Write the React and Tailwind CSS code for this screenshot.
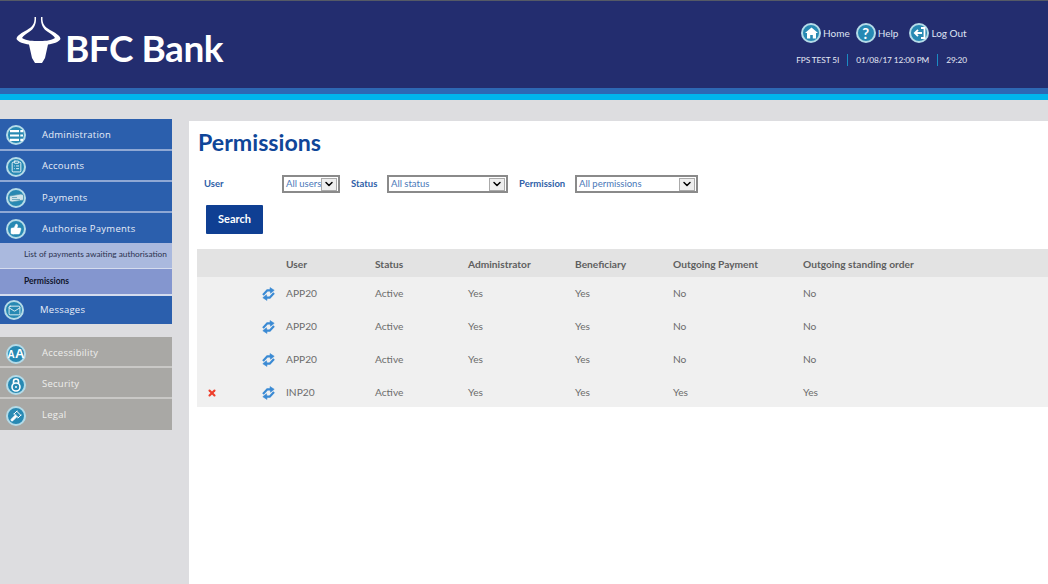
import { ChevronDown, ClipboardList, Gavel, Mail, ThumbsUp, X } from "lucide-react";

function RoundIcon({ children, className = "" }) {
  return (
    <span className={`flex h-5 w-5 shrink-0 items-center justify-center rounded-full border-2 border-[#b4dbe8] bg-[#2789b3] text-white ${className}`}>
      {children}
    </span>
  );
}

function Logo() {
  return (
    <svg width="46" height="48" viewBox="16 16 46 48" className="shrink-0" fill="#fff">
      <path d="M34.5 17C35 24 32 27 27 30C22 33 17 35 16.5 39C18 42 24 44 29 44.5L32 58L35 63L42 63L45 58L48 44.5C53 44 59 42 60.5 39C60 35 55 33 50 30C45 27 42 24 42.5 17L41 17C40.5 24 43 29 48 32C51 34 54 36 55 38C50 41 44 41 38.5 41C33 41 27 41 22 38C23 36 26 34 29 32C34 29 36.5 24 36 17Z" />
    </svg>
  );
}

function HomeGlyph() {
  return (
    <svg width="13" height="12" viewBox="0 0 13 12" fill="#fff">
      <path d="M6.5 0.5L13 6H11V11.5H7.8V8H5.2V11.5H2V6H0Z" />
    </svg>
  );
}

function BackGlyph() {
  return (
    <svg width="13" height="12" viewBox="0 0 13 12" fill="none" stroke="#fff" strokeWidth="1.8">
      <path d="M8 1H11.5V11H8" />
      <path d="M9 6H2M5 2.8L1.8 6L5 9.2" />
    </svg>
  );
}

function ListGlyph() {
  return (
    <svg width="13" height="11" viewBox="0 0 13 11" fill="#fff">
      <path d="M0 0H9V2.2H0ZM0 4.4H9V6.6H0ZM0 8.8H9V11H0ZM10.3 0H13V2.2H10.3ZM10.3 4.4H13V6.6H10.3ZM10.3 8.8H13V11H10.3Z" />
    </svg>
  );
}

function NotesGlyph() {
  return (
    <svg width="15" height="10" viewBox="0 0 15 10" fill="#cfe4ea" stroke="#4a93ae" strokeWidth="0.7">
      <path d="M0.5 3L12 1L14.5 2V7L3 9L0.5 8Z" />
      <path d="M3 4.5H8M3 6.5H11" />
    </svg>
  );
}

function LockGlyph() {
  return (
    <svg width="12" height="14" viewBox="0 0 12 14" fill="none" stroke="#fff" strokeWidth="1.6">
      <path d="M3.5 5.5V3.5A2.5 2.5 0 0 1 8.5 3.5V5.5" />
      <circle cx="6" cy="9" r="4" />
      <circle cx="6" cy="9" r="1" fill="#fff" stroke="none" />
    </svg>
  );
}

function SyncGlyph() {
  return (
    <svg width="15" height="14" viewBox="0 0 15 14" fill="none" stroke="#3a8ad4" strokeWidth="2.2">
      <path d="M2 8L6.3 3.3H10" />
      <path d="M13 6L8.7 10.7H5" />
      <path d="M9 0.6L13.2 3.3L9.5 6.2Z" fill="#3a8ad4" strokeWidth="0.6" />
      <path d="M6 13.4L1.8 10.7L5.5 7.8Z" fill="#3a8ad4" strokeWidth="0.6" />
    </svg>
  );
}

function TopLink({ icon, label, className = "" }) {
  return (
    <a className={`flex items-center gap-[2px] text-[10px] whitespace-nowrap text-[#dfe3f3] ${className}`}>
      <RoundIcon>{icon}</RoundIcon>
      <span>{label}</span>
    </a>
  );
}

function Header() {
  return (
    <header className="shrink-0">
      <div className="flex h-[88px] items-start justify-between border-t border-[#555a66] bg-[#232d6f] pl-[16px] pr-[81px]">
        <div className="flex items-start gap-[3px] pt-[15px]">
          <Logo />
          <span className="mt-[8px] font-['Lato',sans-serif] text-[37px] font-bold leading-[48px] tracking-[-0.5px] text-white">BFC Bank</span>
        </div>
        <div className="flex flex-col items-end pt-[22px]">
          <div className="flex w-[166px]">
            <TopLink icon={<HomeGlyph />} label="Home" />
            <TopLink icon={<span className="text-[15px] font-bold leading-none">?</span>} label="Help" className="ml-[6px]" />
            <TopLink icon={<BackGlyph />} label="Log Out" className="ml-[11px]" />
          </div>
          <div className="mt-[11px] flex h-[12px] items-center text-[8.3px] leading-[12px] tracking-[-0.1px] text-[#e6e9f5]">
            <span className="pr-[8px]">FPS TEST 5I</span>
            <span className="border-l border-[#1b8cc4] px-[8px]">01/08/17 12:00 PM</span>
            <span className="border-l border-[#1b8cc4] pl-[8px]">29:20</span>
          </div>
        </div>
      </div>
      <div className="h-[6px] bg-[#2d68b4]" />
      <div className="h-[6px] bg-[#00b5ec]" />
    </header>
  );
}

function NavItem({ icon, label, height, gray, pad = "pt-[2px]" }) {
  return (
    <a
      className={`flex items-center border-b-2 pl-[6px] text-[9.5px] tracking-[0.25px] ${pad} ${height} ${
        gray ? "border-[#c9c8c6] bg-[#a9a8a5] text-[#eeeeec]" : "border-[#8fa8d4] bg-[#2b5fad] text-[#e8eef8]"
      }`}
    >
      <RoundIcon>{icon}</RoundIcon>
      <span className="ml-[16px]">{label}</span>
    </a>
  );
}

function Sidebar() {
  return (
    <aside className="w-[189px] shrink-0 bg-[#dddde0] pt-[19px]">
      <nav className="w-[172px] font-['Open_Sans',sans-serif]">
        <NavItem height="h-[32px]" icon={<ListGlyph />} label="Administration" />
        <NavItem height="h-[31px]" icon={<ClipboardList size={13} strokeWidth={1.6} />} label="Accounts" />
        <NavItem height="h-[31px]" pad="pt-[3px]" icon={<NotesGlyph />} label="Payments" />
        <div className="flex h-[30px] items-center bg-[#2b5fad] pl-[6px] pt-[2px] text-[9.5px] tracking-[0.25px] text-[#e8eef8]">
          <RoundIcon><ThumbsUp size={12} fill="#fff" strokeWidth={1} /></RoundIcon>
          <span className="ml-[16px]">Authorise Payments</span>
        </div>
        <div className="flex h-[26px] items-center border-b border-[#d5dcee] bg-[#aab9de] pb-[3px] pl-[24px] font-['Lato',sans-serif] text-[8.3px] whitespace-nowrap text-[#2c3350]">
          List of payments awaiting authorisation
        </div>
        <div className="flex h-[27px] items-center border-b-2 border-[#d5dcee] bg-[#8496cf] pl-[24px] font-['Lato',sans-serif] text-[8.5px] font-bold text-[#10152c]">
          Permissions
        </div>
        <div className="flex h-[28px] items-center bg-[#2b5fad] pl-[4px] text-[9.5px] tracking-[0.25px] text-[#e8eef8]">
          <RoundIcon><Mail size={13} strokeWidth={1.5} /></RoundIcon>
          <span className="ml-[16px]">Messages</span>
        </div>
        <div className="mt-[13px]">
          <NavItem gray height="h-[31px]" pad="pt-[4px]" icon={<span className="font-['Liberation_Sans',sans-serif] text-[13px] font-bold leading-none"><span className="text-[10px]">A</span>A</span>} label="Accessibility" />
          <NavItem gray height="h-[31px]" pad="pt-[4px]" icon={<LockGlyph />} label="Security" />
          <div className="flex h-[31px] items-center bg-[#a9a8a5] pl-[6px] pt-[2px] text-[9.5px] tracking-[0.25px] text-[#eeeeec]">
            <RoundIcon><Gavel size={12} fill="#fff" strokeWidth={2} /></RoundIcon>
            <span className="ml-[16px]">Legal</span>
          </div>
        </div>
      </nav>
    </aside>
  );
}

function FakeSelect({ value, width }) {
  return (
    <div className={`flex h-[18px] items-center justify-between border-2 border-[#8a8a8a] bg-white pl-[2px] pr-[1px] text-[9.5px] font-normal text-[#4a78b8] ${width}`}>
      <span className="whitespace-nowrap">{value}</span>
      <span className="flex h-[13px] w-[16px] items-center justify-center border border-[#aaa] bg-[#eeeeee] text-black">
        <ChevronDown size={12} strokeWidth={3} />
      </span>
    </div>
  );
}

function Filters() {
  return (
    <div className="flex items-center pl-[7px] text-[9.5px] font-bold text-[#2f5fa8]">
      <span className="w-[78px]">User</span>
      <FakeSelect value="All users" width="w-[58px]" />
      <span className="ml-[11px] w-[36px]">Status</span>
      <FakeSelect value="All status" width="w-[121px]" />
      <span className="ml-[11px] w-[56px]">Permission</span>
      <FakeSelect value="All permissions" width="w-[123px]" />
    </div>
  );
}

const columns = "grid grid-cols-[64px_25px_89px_93px_107px_98px_130px_1fr] items-center";

const rows = [
  { user: "APP20", vals: ["Yes", "Yes", "No", "No"] },
  { user: "APP20", vals: ["Yes", "Yes", "No", "No"] },
  { user: "APP20", vals: ["Yes", "Yes", "No", "No"] },
  { user: "INP20", vals: ["Yes", "Yes", "Yes", "Yes"], removable: true },
];

function PermissionsTable() {
  return (
    <div className="mt-[15px] text-[10.2px] text-[#6c6c6c]">
      <div className={`${columns} h-[28px] bg-[#e3e3e3] pt-[4px] font-bold text-[#5f5f5f]`}>
        <span />
        <span />
        <span>User</span>
        <span>Status</span>
        <span>Administrator</span>
        <span>Beneficiary</span>
        <span>Outgoing Payment</span>
        <span>Outgoing standing order</span>
      </div>
      <div className="bg-[#f0f0f0]">
        {rows.map((row, i) => (
          <div key={i} className={`${columns} h-[33px] last:h-[31px] last:pt-[2px]`}>
            <span className="pl-[10px] text-[#ee3f2c]">
              {row.removable && <X size={10} strokeWidth={5} />}
            </span>
            <span><SyncGlyph /></span>
            <span>{row.user}</span>
            <span>Active</span>
            {row.vals.map((v, j) => <span key={j}>{v}</span>)}
          </div>
        ))}
      </div>
    </div>
  );
}

function Content() {
  return (
    <main className="flex min-w-0 grow flex-col bg-[#dddde0] pt-[21px]">
      <div className="grow bg-white pl-[8px] font-['Lato',sans-serif]">
        <h1 className="pt-[6px] pl-[1px] text-[23.2px] font-bold leading-[30px] text-[#0f4699]">Permissions</h1>
        <div className="mt-[18px]"><Filters /></div>
        <button className="mt-[12px] ml-[9px] block h-[29px] w-[57px] rounded-[1px] bg-[#0f3f93] text-[11px] font-bold text-white">Search</button>
        <PermissionsTable />
      </div>
    </main>
  );
}

export default function App() {
  return (
    <div className="flex h-[584px] w-[1048px] flex-col overflow-hidden font-['Lato',sans-serif]">
      <Header />
      <div className="flex grow">
        <Sidebar />
        <Content />
      </div>
    </div>
  );
}
